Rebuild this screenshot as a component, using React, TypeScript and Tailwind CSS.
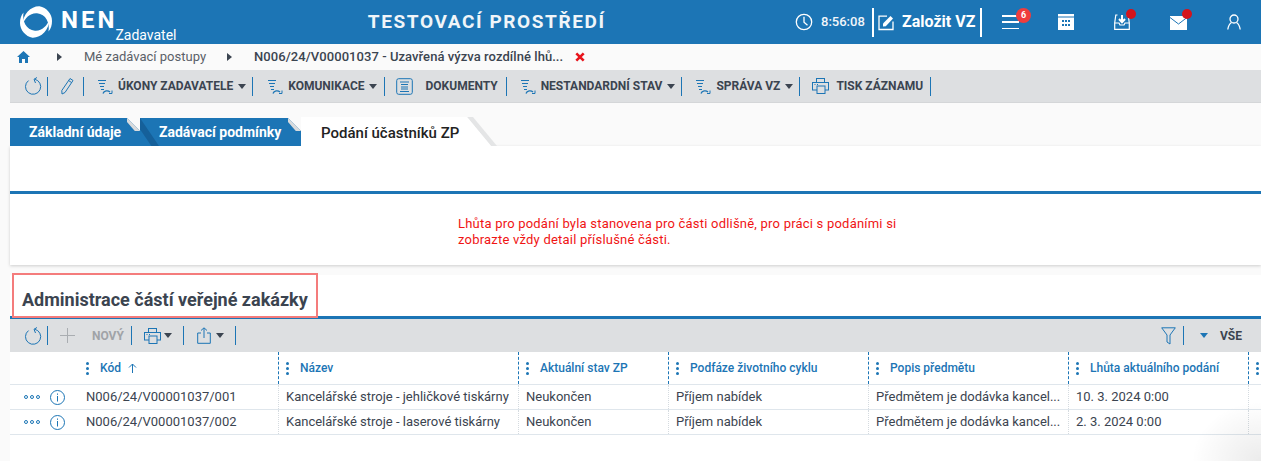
import React from "react";

const B = "#1c75b5";

function Logo() {
  const d = "M3.500 20C3.800 9 12 1 20.500 1.300C27.500 2.500 33 9 33 16C33 20 32 23.500 29.500 26.500C31 18 27 9 18 8.300C11 7.800 6 13 3.500 20Z";
  return (
    <svg width="34" height="34" viewBox="0 0 34 34" className="shrink-0" fill="#fff">
      <path d={d} />
      <path d={d} transform="rotate(180 17 17)" />
    </svg>
  );
}

function Refresh() {
  return (
    <svg width="18" height="18" viewBox="0 0 18 18" fill="none" stroke={B} strokeWidth="1" className="shrink-0">
      <path d="M10.500 2.200 A7.600 7.600 0 1 1 4.500 3.600" />
      <path d="M13 .5 L10 2.300 L11.500 6" />
    </svg>
  );
}

function Action() {
  return (
    <svg width="16" height="17" viewBox="0 0 16 17" fill="none" stroke={B} strokeWidth="1" className="shrink-0">
      <path d="M1 2.500H9M2 5.500H8M3 8.500H7M4 11.500H7" />
      <path d="M6 15.500C7 12.500 11 12 13 14" strokeWidth="1.300" />
      <path d="M15 12.500V15.500H12" strokeWidth="1" />
    </svg>
  );
}

function Printer() {
  return (
    <svg width="17" height="16" viewBox="0 0 17 16" fill="none" stroke={B} strokeWidth="1" className="shrink-0">
      <rect x="4.500" y=".5" width="8" height="4" />
      <rect x=".5" y="4.500" width="16" height="7.500" />
      <rect x="5" y="8" width="8" height="7.500" fill="#dddfe1" />
      <path d="M2.500 6.500H3.500M5 6.500H6" />
    </svg>
  );
}

function Caret({ color = "#3b4450" }: { color?: string }) {
  return <span className="block w-0 h-0 border-x-[4px] border-x-transparent border-t-[5px] shrink-0" style={{ borderTopColor: color }} />;
}

function Sep({ ml }: { ml: string }) {
  return <span className={`block w-px h-[19px] bg-[#1c75b5] shrink-0 ${ml}`} />;
}

function ToolLabel({ children, className = "" }: { children: React.ReactNode; className?: string }) {
  return <span className={`text-[12px] font-bold text-[#3b4450] whitespace-nowrap leading-none ${className}`}>{children}</span>;
}

function TopIcons() {
  return (
    <div className="flex items-center h-full">
      <svg width="18" height="18" viewBox="0 0 18 18" fill="none" stroke="#fff" strokeWidth="1.300">
        <circle cx="9" cy="9" r="7.700" />
        <path d="M9 3.800V9.300L12.500 12.300" />
      </svg>
      <span className="ml-[8px] w-[46px] text-[13px] font-medium text-[#f2f6fa]">8:56:08</span>
      <span className="ml-[5px] w-[2px] h-[29px] bg-white" />
      <svg width="17" height="17" viewBox="0 0 17 17" fill="none" stroke="#fff" strokeWidth="1.300" className="ml-[4px]">
        <path d="M9 2.200H1V15.500H15V7.500" />
        <path d="M5 12.500V9.500L12.500 2L15 4.500L7.800 12.300Z" fill="#fff" stroke="none" />
      </svg>
      <span className="ml-[7px] w-[74px] text-[16px] font-bold text-white whitespace-nowrap">Založit VZ</span>
      <span className="ml-[4px] w-[2px] h-[29px] bg-white" />
      <div className="relative ml-[20px] w-[17px] h-[14px] flex flex-col justify-between">
        <span className="h-[1.500px] bg-white" /><span className="h-[1.500px] bg-white" /><span className="h-[1.500px] bg-white" />
        <span className="absolute -top-[7px] left-[14px] w-[15px] h-[15px] rounded-full bg-[#ef3d3d] text-white text-[9px] font-bold flex items-center justify-center leading-none">6</span>
      </div>
      <svg width="16" height="16" viewBox="0 0 16 16" className="ml-[39px]">
        <rect x="0" y="0" width="16" height="16" fill="#fff" />
        <rect x="0" y="2.500" width="16" height="1" fill={B} />
        <g fill={B}>
          <rect x="4" y="6" width="2" height="2" /><rect x="7" y="6" width="2" height="2" /><rect x="10" y="6" width="2" height="2" />
          <rect x="4" y="10" width="2" height="2" /><rect x="7" y="10" width="2" height="2" /><rect x="10" y="10" width="2" height="2" />
        </g>
      </svg>
      <div className="relative ml-[40px] w-[16px] h-[16px]">
        <svg width="16" height="16" viewBox="0 0 16 16" fill="none" stroke="#fff" strokeWidth="1.200">
          <path d="M3.500 1H1.800L.7 9V15.300H15.300V9L14.200 1H12.500" />
          <path d="M.7 9H5L6 11H10L11 9H15.300" />
          <path d="M8 1V7M5 5L8 8.200L11 5" strokeWidth="2" />
        </svg>
        <span className="absolute -top-[5px] left-[12px] w-[10px] h-[10px] rounded-full bg-[#d4141c]" />
      </div>
      <div className="relative ml-[40px] w-[17px] h-[14px] mt-[2px]">
        <svg width="17" height="14" viewBox="0 0 17 14">
          <path d="M0 0H17V14H0Z" fill="#fff" />
          <path d="M0 1.500L8.500 8L17 1.500" fill="none" stroke={B} strokeWidth="1" />
        </svg>
        <span className="absolute -top-[7px] left-[12px] w-[10px] h-[10px] rounded-full bg-[#d4141c]" />
      </div>
      <svg width="14" height="16" viewBox="0 0 14 16" fill="none" stroke="#fff" strokeWidth="1.300" className="ml-[40px]">
        <circle cx="7" cy="5" r="4" />
        <path d="M.8 15.500C1.300 12 3 9.500 4.500 8.500M13.200 15.500C12.700 12 11 9.500 9.500 8.500" />
      </svg>
    </div>
  );
}

const cols = "grid grid-cols-[68px_200px_240px_150px_200px_200px_180px_13px]";
const headers = ["Kód", "Název", "Aktuální stav ZP", "Podfáze životního cyklu", "Popis předmětu", "Lhůta aktuálního podání", ""];
const rows = [
  ["N006/24/V00001037/001", "Kancelářské stroje - jehličkové tiskárny", "Neukončen", "Příjem nabídek", "Předmětem je dodávka kancel...", "10. 3. 2024 0:00", ""],
  ["N006/24/V00001037/002", "Kancelářské stroje - laserové tiskárny", "Neukončen", "Příjem nabídek", "Předmětem je dodávka kancel...", "2. 3. 2024 0:00", ""],
];

function Dots() {
  return (
    <span className="flex flex-col gap-[2px] shrink-0">
      <span className="w-[3px] h-[3px] rounded-full bg-[#1c75b5]" />
      <span className="w-[3px] h-[3px] rounded-full bg-[#1c75b5]" />
      <span className="w-[3px] h-[3px] rounded-full bg-[#1c75b5]" />
    </span>
  );
}

function BlueTab({ width, label, first }: { width: string; label: string; first?: boolean }) {
  return (
    <div className={`relative ${width} h-[28px] bg-[#1c75b5] text-white font-bold text-[14px] pl-[19px] flex items-center whitespace-nowrap`}>
      {!first && <span className="absolute left-0 top-0 w-[19px] h-[28px] bg-[#15609a] [clip-path:polygon(0_0,100%_100%,60%_100%,0_40%)]" />}
      <span className="relative">{label}</span>
      <span className="absolute right-0 top-0 w-[13px] h-[13px] bg-[#fafafa] [clip-path:polygon(0_0,100%_0,100%_100%)]" />
      <span className="absolute right-0 top-0 w-[13px] h-[13px] bg-[#d9dbdd] [clip-path:polygon(0_0,100%_100%,60%_100%,0_30%)]" />
    </div>
  );
}

export default function App() {
  return (
    <div className="relative w-[1261px] h-[461px] overflow-hidden bg-[#fafafa] font-['Roboto',sans-serif]">
      <header className="h-[44px] bg-[#1c75b5] flex items-center text-white">
        <div className="w-[19px]" />
        <Logo />
        <span className="ml-[8px] text-[24px] font-bold tracking-[3px] leading-none -mt-[5px]">NEN</span>
        <span className="self-end mb-[1px] -ml-[2px] text-[14px] leading-[16px] text-white">Zadavatel</span>
        <div className="flex-1 flex justify-center pl-[2px]">
          <span className="text-[19px] font-bold tracking-[1.600px] text-[#f0f5f9] whitespace-nowrap">TESTOVACÍ PROSTŘEDÍ</span>
        </div>
        <TopIcons />
        <div className="w-[20px]" />
      </header>

      <nav className="h-[26px] flex items-center text-[13px]">
        <svg width="13" height="12" viewBox="0 0 13 12" className="ml-[17px]" fill={B}>
          <path d="M6.500 0L13 6H11V12H8V8H5V12H2V6H0Z" />
        </svg>
        <span className="ml-[27px] w-0 h-0 border-y-[4px] border-y-transparent border-l-[5px] border-l-[#3b4450]" />
        <span className="ml-[22px] text-[#5a6068]">Mé zadávací postupy</span>
        <span className="ml-[21px] w-0 h-0 border-y-[4px] border-y-transparent border-l-[5px] border-l-[#3b4450]" />
        <span className="ml-[22px] font-medium tracking-[0.06px] text-[#3b4450]">N006/24/V00001037 - Uzavřená výzva rozdílné lhů...</span>
        <svg width="10" height="10" viewBox="0 0 10 10" className="ml-[12px]">
          <path d="M1.300 1.300L8.700 8.700M8.700 1.300L1.300 8.700" stroke="#e8141c" strokeWidth="2.600" />
        </svg>
      </nav>

      <div className="ml-[10px] h-[33px] bg-[#dddfe1] border-b border-[#d4d6d8] flex items-center">
        <span className="w-[14px]" />
        <Refresh />
        <Sep ml="ml-[5px]" />
        <svg width="14" height="18" viewBox="0 0 14 18" fill="none" stroke={B} strokeWidth="1" className="ml-[12px]">
          <path d="M10 1.500L13 3.500L5 15.500L2 17L1.800 13.500Z" />
          <path d="M8.500 3.500L11.500 5.500" />
        </svg>
        <Sep ml="ml-[9px]" />
        <span className="w-[13px]" />
        <Action />
        <ToolLabel className="ml-[5px]">ÚKONY ZADAVATELE</ToolLabel>
        <span className="ml-[5px]"><Caret /></span>
        <Sep ml="ml-[6px]" />
        <span className="w-[14px]" />
        <Action />
        <ToolLabel className="ml-[5px]">KOMUNIKACE</ToolLabel>
        <span className="ml-[4px]"><Caret /></span>
        <Sep ml="ml-[7px]" />
        <svg width="17" height="17" viewBox="0 0 17 17" fill="none" stroke={B} strokeWidth="1" className="ml-[11px]">
          <rect x=".7" y=".7" width="15.600" height="15.600" rx="2" />
          <path d="M4 4H13M5 6.500H12M5 9H12M5 11H12M4 13.500H13" />
        </svg>
        <ToolLabel className="ml-[13px]">DOKUMENTY</ToolLabel>
        <Sep ml="ml-[8px]" />
        <span className="w-[13px]" />
        <Action />
        <ToolLabel className="ml-[5px]">NESTANDARDNÍ STAV</ToolLabel>
        <span className="ml-[5px]"><Caret /></span>
        <Sep ml="ml-[6px]" />
        <span className="w-[13px]" />
        <Action />
        <ToolLabel className="ml-[5px]">SPRÁVA VZ</ToolLabel>
        <span className="ml-[5px]"><Caret /></span>
        <Sep ml="ml-[6px]" />
        <span className="ml-[12px]"><Printer /></span>
        <ToolLabel className="ml-[7px]">TISK ZÁZNAMU</ToolLabel>
        <Sep ml="ml-[7px]" />
      </div>

      <div className="ml-[10px] mt-[14px] h-[29px] flex items-end">
        <BlueTab width="w-[130px]" label="Základní údaje" first />
        <BlueTab width="w-[161px]" label="Zadávací podmínky" />
        <div className="relative h-[29px] w-[196px]">
          <span className="absolute inset-0 bg-[#e4e5e6] [clip-path:polygon(166px_0,172px_0,196px_29px,190px_29px)]" />
          <span className="absolute inset-0 bg-white [clip-path:polygon(0_0,166px_0,190px_29px,0_29px)]" />
          <span className="absolute left-[20px] top-[6px] text-[15px] leading-[20px] font-medium text-[#222] whitespace-nowrap">Podání účastníků ZP</span>
        </div>
      </div>

      <section className="ml-[10px] h-[119px] bg-white shadow-[0_1px_3px_rgba(0,0,0,0.18)] flex flex-col">
        <div className="h-[45px] shrink-0" />
        <div className="h-[3px] shrink-0 bg-[#1c75b5]" />
        <p className="mt-[22px] ml-[448px] w-[445px] text-[13px] tracking-[0.21px] leading-[16px] text-[#f01414]">
          Lhůta pro podání byla stanovena pro části odlišně, pro práci s podáními si zobrazte vždy detail příslušné části.
        </p>
      </section>

      <section className="ml-[10px] mt-[10px] h-[186px] bg-white flex flex-col">
        <h2 className="h-[41px] shrink-0 pl-[12px] pt-[13px] text-[18px] leading-[24px] font-bold text-[#3b4450]">
          Administrace částí veřejné zakázky
        </h2>
        <div className="h-[3px] shrink-0 bg-[#1c75b5]" />
        <div className="h-[33px] shrink-0 bg-[#dddfe1] flex items-center">
          <span className="w-[14px]" />
          <Refresh />
          <Sep ml="ml-[5px]" />
          <svg width="15" height="15" viewBox="0 0 15 15" stroke="#a9adb1" strokeWidth="1" className="ml-[12px]">
            <path d="M7.500 0V15M0 7.500H15" />
          </svg>
          <span className="ml-[17px] text-[12px] font-bold text-[#a0a3a7] leading-none">NOVÝ</span>
          <Sep ml="ml-[7px]" />
          <span className="ml-[12px]"><Printer /></span>
          <span className="ml-[3px]"><Caret /></span>
          <Sep ml="ml-[11px]" />
          <svg width="14" height="17" viewBox="0 0 14 17" fill="none" stroke={B} strokeWidth="1" className="ml-[13px]">
            <path d="M4 6H.7V16.300H13.300V6H10" />
            <path d="M7 11V1M4 3.500L7 .8L10 3.500" />
          </svg>
          <span className="ml-[5px]"><Caret /></span>
          <Sep ml="ml-[11px]" />
          <span className="flex-1" />
          <svg width="15" height="18" viewBox="0 0 15 18" fill="none" stroke={B} strokeWidth="1">
            <path d="M.7 .8H14.300L9 8V17L6 15V8Z" />
          </svg>
          <Sep ml="ml-[7px]" />
          <span className="ml-[16px]"><Caret color="#1c75b5" /></span>
          <ToolLabel className="ml-[12px]">VŠE</ToolLabel>
          <span className="w-[19px]" />
        </div>

        <div className={`${cols} h-[33px] border-b border-[#dfe6ec]`}>
          <div />
          {headers.map((h, i) => (
            <div key={i} className={`flex items-center whitespace-nowrap overflow-hidden ${i === 0 ? "pl-[8px]" : "pl-[7px] border-l border-dashed border-[#1c75b5]"}`}>
              <Dots />
              <span className="ml-[11px] text-[12px] font-medium text-[#1c75b5]">{h}</span>
              {i === 0 && (
                <svg width="9" height="10" viewBox="0 0 9 10" fill="none" stroke={B} strokeWidth="1" className="ml-[7px]">
                  <path d="M4.500 10V1M1 4.500L4.500 1L8 4.500" />
                </svg>
              )}
            </div>
          ))}
        </div>
        {rows.map((r, ri) => (
          <div key={ri} className={`${cols} h-[25px] border-b border-[#dfe6ec]`}>
            <div className="flex items-center">
              <span className="ml-[14px] flex gap-[2px]">
                <span className="w-[4px] h-[4px] rounded-full border border-[#1c75b5]" />
                <span className="w-[4px] h-[4px] rounded-full border border-[#1c75b5]" />
                <span className="w-[4px] h-[4px] rounded-full border border-[#1c75b5]" />
              </span>
              <svg width="15" height="15" viewBox="0 0 15 15" fill="none" stroke={B} strokeWidth="1" className="ml-[10px]">
                <circle cx="7.500" cy="7.500" r="7" />
                <path d="M7.500 6V11.500M7.500 3.500V4.800" />
              </svg>
            </div>
            {r.map((c, i) => (
              <div key={i} className={`flex items-center text-[13px] text-[#3b4450] whitespace-nowrap overflow-hidden ${i === 0 ? "pl-[8px]" : "pl-[7px] border-l border-dotted border-[#d5dbe0]"}`}>
                {c}
              </div>
            ))}
          </div>
        ))}
      </section>

      <div className="absolute left-[12px] top-[273px] w-[306px] h-[45px] border-2 border-[#f47c7c] pointer-events-none" />
      <div className="absolute right-0 bottom-0 w-[70px] h-[60px] bg-[radial-gradient(ellipse_at_bottom_right,rgba(0,0,0,0.08),rgba(0,0,0,0)_70%)] pointer-events-none" />
    </div>
  );
}
